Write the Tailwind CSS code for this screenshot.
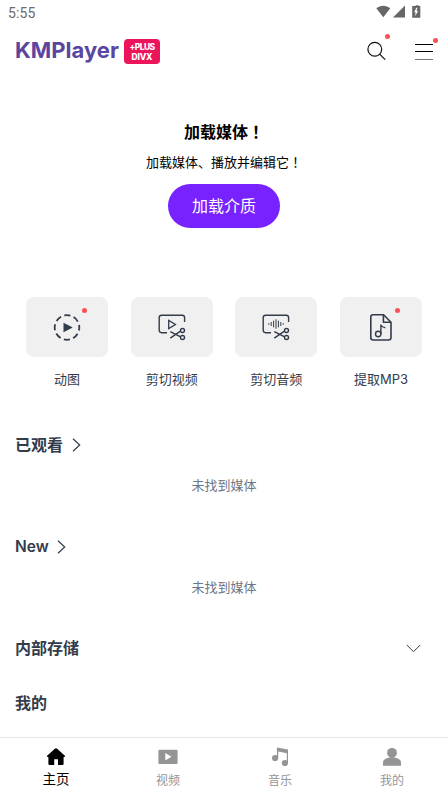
<!DOCTYPE html>
<html lang="zh-CN">
<head>
    <meta charset="UTF-8">
    <meta name="viewport" content="width=device-width, initial-scale=1.0">
    <title>KMPlayer</title>
    <script src="https://cdn.jsdelivr.net/npm/@tailwindcss/browser@4"></script>
</head>
<body class="bg-white font-['Inter','Noto_Sans_CJK_SC',sans-serif]">
    <div class="w-[448px] h-[796px] flex flex-col overflow-hidden">

        <!-- Status bar -->
        <div class="h-6 shrink-0 flex items-center justify-between pl-2 pr-[27px]">
            <span class="font-['Roboto',sans-serif] text-[14px] leading-6 tracking-[0.1px] text-[#6b6b6b] pt-[2px]">5:55</span>
            <div class="flex items-center text-[#666666]">
                <svg width="46" height="14" viewBox="0 0 46 14" fill="currentColor">
                    <path d="M1.3 3.2C5.5-.2 11-.2 15.3 3.2L8.3 12.3z" />
                    <path d="M30 .5V12.5H18z" />
                    <path fill-rule="evenodd" d="M39 1h1.6V.2h3V1h1.7v11.8H37.2V1zM41.3 2.8l-2.1 4.4h1.4l-.5 4 3-5.2h-1.5l.8-3.2z" />
                </svg>
            </div>
        </div>

        <!-- Header -->
        <header class="h-[54px] shrink-0 flex items-center justify-between pl-[15px] pr-[14px]">
            <div class="flex items-center gap-[5px]">
                <span class="w-[104px] whitespace-nowrap text-[22px] leading-7 font-bold text-[#5b469f] -mt-[2px]">KMPlayer</span>
                <span class="w-9 h-[25px] mt-[1px] rounded-[4px] bg-[#ee145b] text-white text-[8.5px] leading-[10px] font-extrabold flex flex-col items-center justify-center"><span class="tracking-[-0.6px]">+PLUS</span><span class="tracking-[-0.2px]">DIVX</span></span>
            </div>
            <div class="flex items-center gap-[28px]">
                <div class="relative">
                    <svg width="20" height="20" viewBox="0 0 20 20" fill="none" stroke="#111" stroke-width="1.2">
                        <circle cx="7.8" cy="8.3" r="6.9" />
                        <path d="M12.7 13.2l5.5 5.5" />
                    </svg>
                    <span class="absolute -top-[7px] right-[-3px] w-[5px] h-[5px] rounded-full bg-[#fd5054]"></span>
                </div>
                <div class="relative">
                    <svg width="19" height="18" viewBox="0 0 19 18" fill="none" stroke="#000">
                        <path d="M0 2.5h18M0 9.5h18" />
                        <path d="M0 17.5h18" stroke="#777" />
                    </svg>
                    <span class="absolute -top-[4px] -right-[4px] w-[5px] h-[5px] rounded-full bg-[#fd5054]"></span>
                </div>
            </div>
        </header>

        <!-- Load media -->
        <section class="h-[219px] shrink-0 pt-[41px] flex flex-col items-center text-black">
            <h1 class="text-[16px] leading-6 font-bold">加载媒体<span class="font-['Noto_Sans_CJK_TC',sans-serif]" lang="zh-TW">！</span></h1>
            <p class="mt-[8px] text-[13px] leading-5">加载媒体、播放并编辑它<span class="font-['Noto_Sans_CJK_TC',sans-serif]" lang="zh-TW">！</span></p>
            <button class="mt-[12px] w-28 h-11 rounded-full bg-[#7722ff] text-white text-[16px] leading-6">加载介质</button>
        </section>

        <!-- Tools -->
        <section class="h-[128px] shrink-0 px-[26px] grid grid-cols-4 gap-x-[22.5px] text-[#333c4b]">
            <div>
                <div class="relative h-[60px] rounded-lg bg-[#f0f0f0] flex items-center justify-center">
                    <svg width="28" height="28" viewBox="0 0 28 28" fill="none" stroke="currentColor" stroke-width="1.8">
                        <circle cx="14" cy="14.5" r="12.3" stroke-dasharray="6.2 3.46" stroke-dashoffset="3.1" />
                        <path d="M10.5 9.8v9.4l9.2-4.7z" fill="currentColor" stroke="none" />
                    </svg>
                    <span class="absolute top-[11px] right-[21.5px] w-[5px] h-[5px] rounded-full bg-[#fd5054]"></span>
                </div>
                <p class="mt-3 text-center text-[13px] leading-5">动图</p>
            </div>
            <div>
                <div class="h-[60px] rounded-lg bg-[#f0f0f0] flex items-center justify-center">
                    <svg width="28" height="28" viewBox="0 0 28 28" fill="none" stroke="currentColor" stroke-width="1.4">
                        <path d="M9 19.7H3.6Q1.2 19.7 1.2 17.3V4.5Q1.2 2.2 3.6 2.2H24.2Q26.6 2.2 26.6 4.5V9" />
                        <path d="M10.7 7.4v8.2l6.8-4.1z" stroke-width="1.3" />
                        <path d="M12.3 18.6l9.8 5M12.3 25.2l9.8-6.8" />
                        <circle cx="24.5" cy="17.5" r="2" />
                        <circle cx="24.5" cy="24.5" r="2" />
                    </svg>
                </div>
                <p class="mt-3 text-center text-[13px] leading-5">剪切视频</p>
            </div>
            <div>
                <div class="h-[60px] rounded-lg bg-[#f0f0f0] flex items-center justify-center">
                    <svg width="28" height="28" viewBox="0 0 28 28" fill="none" stroke="currentColor" stroke-width="1.4">
                        <path d="M9 19.7H3.6Q1.2 19.7 1.2 17.3V4.5Q1.2 2.2 3.6 2.2H24.2Q26.6 2.2 26.6 4.5V9" />
                        <path d="M6.8 10.2v1.6M9.2 9v4M11.6 7.7v6.6M14 6.3v9.4M16.4 7.7v6.6M18.8 9v4M21.2 10.2v1.6" stroke-width="1" />
                        <path d="M12.3 18.6l9.8 5M12.3 25.2l9.8-6.8" />
                        <circle cx="24.5" cy="17.5" r="2" />
                        <circle cx="24.5" cy="24.5" r="2" />
                    </svg>
                </div>
                <p class="mt-3 text-center text-[13px] leading-5">剪切音频</p>
            </div>
            <div>
                <div class="relative h-[60px] rounded-lg bg-[#f0f0f0] flex items-center justify-center">
                    <svg width="28" height="28" viewBox="0 0 28 28" fill="none" stroke="currentColor" stroke-width="1.6" stroke-linejoin="round">
                        <path d="M6 1.7H16.6L24 9.3V24.5Q24 27 21.4 27H6.2Q3.8 27 3.8 24.5V4.1Q3.8 1.7 6 1.7z" />
                        <path d="M16.4 2V9.3H23.8" />
                        <circle cx="11.2" cy="21" r="2.7" stroke-width="1.4" />
                        <path d="M13.9 21V12Q15.3 14.5 18.3 14.8" stroke-width="1.4" />
                    </svg>
                    <span class="absolute top-[11px] right-[22px] w-[5px] h-[5px] rounded-full bg-[#fd5054]"></span>
                </div>
                <p class="mt-3 text-center text-[13px] leading-5">提取MP3</p>
            </div>
        </section>

        <!-- Media lists -->
        <main class="flex-1 pt-2 px-[15px] text-[#333c4b]">
            <div class="h-6 flex items-center gap-[9px]">
                <h2 class="text-[16px] leading-6 font-bold">已观看</h2>
                <svg width="9" height="14" viewBox="0 0 9 14" fill="none" stroke="currentColor" stroke-width="1.2"><path d="M1 .7L7.7 7 1 13.3" /></svg>
            </div>
            <p class="mt-[18px] text-center text-[13px] leading-5 text-[#6b7585]">未找到媒体</p>
            <div class="mt-[39.5px] h-6 flex items-center gap-[8px]">
                <h2 class="text-[15.5px] leading-6 font-semibold">New</h2>
                <svg width="9" height="14" viewBox="0 0 9 14" fill="none" stroke="currentColor" stroke-width="1.2"><path d="M1 .7L7.7 7 1 13.3" /></svg>
            </div>
            <p class="mt-[18.5px] text-center text-[13px] leading-5 text-[#6b7585]">未找到媒体</p>
            <div class="mt-[39px] h-6 flex items-center justify-between pr-3">
                <h2 class="text-[16px] leading-6 font-bold">内部存储</h2>
                <svg width="15" height="9" viewBox="0 0 15 9" fill="none" stroke="currentColor"><path d="M.8 1L7.5 7.7 14.2 1" /></svg>
            </div>
            <h2 class="mt-[31px] text-[16px] leading-6 font-bold">我的</h2>
        </main>

        <!-- Bottom navigation -->
        <nav class="h-[59px] shrink-0 border-t border-[#e2e8ea] grid grid-cols-4 text-[12px] leading-[18px] text-[#949494]">
            <div class="flex flex-col items-center pt-[9px] text-black text-[13.5px]">
                <svg width="20" height="20" viewBox="0 0 20 20" fill="currentColor"><path d="M10 1.2Q10.6 1.2 11.2 1.8L18.6 8.5Q19.8 10 18.2 10H17.6V17Q17.6 18 16.6 18H12V12.3H8.2V18H3.4Q2.4 18 2.4 17V10H1.8Q.2 10 1.4 8.5L8.8 1.8Q9.4 1.2 10 1.2z" /></svg>
                <span class="mt-[3px]">主页</span>
            </div>
            <div class="flex flex-col items-center pt-[9px]">
                <svg width="20" height="20" viewBox="0 0 20 20" fill="currentColor"><path fill-rule="evenodd" d="M1.5 2.8H18.5Q19.6 2.8 19.6 3.9V15.9Q19.6 17 18.5 17H1.5Q.4 17 .4 15.9V3.9Q.4 2.8 1.5 2.8zM7.3 6v7.6l6.2-3.8z" /></svg>
                <span class="mt-[5px]">视频</span>
            </div>
            <div class="flex flex-col items-center pt-[9px]">
                <svg width="20" height="20" viewBox="0 0 20 20" fill="currentColor">
                    <path d="M6.9.6L18 2.6V16H16.8V6.2L8.2 4.6V11H6.9z" />
                    <circle cx="5.1" cy="11" r="3.1" />
                    <circle cx="14.9" cy="16" r="3.1" />
                </svg>
                <span class="mt-[5px]">音乐</span>
            </div>
            <div class="flex flex-col items-center pt-[9px]">
                <svg width="20" height="20" viewBox="0 0 20 20" fill="currentColor">
                    <circle cx="10" cy="5.8" r="4.9" />
                    <path d="M1 18.8V15.3C1 12.5 5 10.2 10 10.2S19 12.5 19 15.3V18.8z" />
                </svg>
                <span class="mt-[5px]">我的</span>
            </div>
        </nav>
    </div>
</body>
</html>
